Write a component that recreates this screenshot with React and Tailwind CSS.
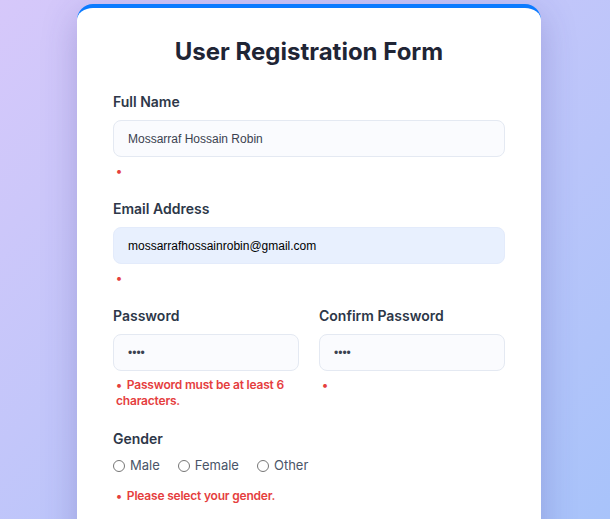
import React from "react";

const poppins = { fontFamily: "Inter, 'Noto Sans', sans-serif" };

function ErrorLine({ children, className = "" }) {
  return (
    <div className={"pl-[3px] text-[12px] leading-[16px] font-semibold tracking-[-0.2px] text-[#e53e3e] " + className}>
      <span className="mr-[5px]">•</span>
      {children}
    </div>
  );
}

function Field({ label, value, autofill, error, type = "text" }) {
  return (
    <div className="mb-5">
      <label className="block text-[14px] leading-[20px] font-semibold text-[#2d3748] mb-2">{label}</label>
      <input
        type={type}
        readOnly
        value={value}
        className={
          "block w-full h-[37px] rounded-[8px] border px-[14px] text-[12px] font-['Liberation_Sans',Arial,sans-serif] outline-none " +
          (autofill
            ? "bg-[#e8f0fe] border-[#e3ebfb] text-black"
            : "bg-[#fafbfe] border-[#e4e9f2] text-[#3a4250]")
        }
      />
      <ErrorLine className="mt-[6px]">{error}</ErrorLine>
    </div>
  );
}

export default function App() {
  return (
    <div
      className="h-[519px] overflow-hidden bg-gradient-to-br from-[#d6c8fa] to-[#a8c3fa] pt-[4px]"
      style={poppins}
    >
      <div className="ml-[77px] w-[464px] bg-white rounded-[16px] border-t-[4px] border-[#0b7bff] shadow-[0_10px_35px_rgba(60,50,140,0.25)] px-[36px] pt-[26px] pb-[60px]">
        <h1 className="text-center text-[24px] leading-[36px] font-bold text-[#1f2535] mb-[22px]">
          User Registration Form
        </h1>
        <Field label="Full Name" value="Mossarraf Hossain Robin" error="" />
        <Field label="Email Address" value="mossarrafhossainrobin@gmail.com" autofill error="" />
        <div className="grid grid-cols-2 gap-5">
          <Field label="Password" type="password" value="1234" error="Password must be at least 6 characters." />
          <Field label="Confirm Password" type="password" value="1234" error="" />
        </div>
        <div>
          <div className="text-[14px] leading-[20px] font-semibold text-[#2d3748]">Gender</div>
          <div className="mt-[7px] flex items-center h-[20px] text-[13px] text-[#4a5568]">
            {["Male", "Female", "Other"].map((g) => (
              <label key={g} className="flex items-center mr-[18px]">
                <input type="radio" name="g" className="w-[12px] h-[12px] mr-[5px]" />
                <span>{g}</span>
              </label>
            ))}
          </div>
          <ErrorLine className="mt-[12px]">Please select your gender.</ErrorLine>
        </div>
      </div>
    </div>
  );
}
